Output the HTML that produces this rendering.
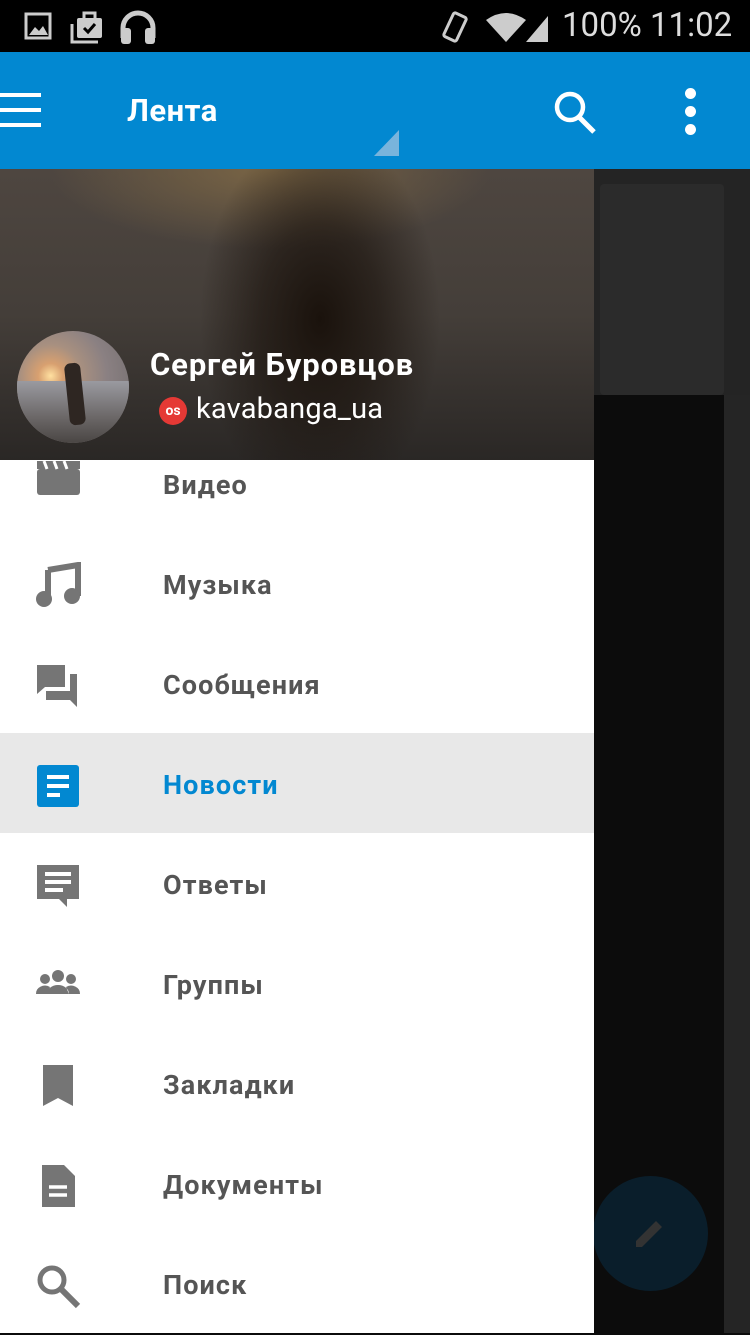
<!DOCTYPE html>
<html><head><meta charset="utf-8"><style>
*{margin:0;padding:0;box-sizing:border-box}
body{width:750px;height:1333px;overflow:hidden;background:#0b0b0b;font-family:"Roboto","Liberation Sans","DejaVu Sans",sans-serif;position:relative}
.abs{position:absolute}
.sb{left:0;top:0;width:750px;height:52px;background:#000;color:#ddd}
.tb{left:0;top:52px;width:750px;height:117px;background:#0288d1}
.item{position:absolute;left:0;width:594px;height:100px}
.item span{position:absolute;left:163px;top:50%;transform:translateY(-50%);font-size:27px;font-weight:bold;color:#555;letter-spacing:1.1px}
.item svg{position:absolute;left:34px;top:27px}
</style></head><body>
<div class="abs sb">
<svg class="abs" style="left:24px;top:12px" width="30" height="30" viewBox="0 0 30 30"><rect x="2" y="2" width="24" height="24" fill="none" stroke="#ccc" stroke-width="3"/><path d="M5 23 L11 15 L15 19 L19 14 L24 23Z" fill="#ccc"/></svg>
<svg class="abs" style="left:70px;top:10px" width="36" height="34" viewBox="0 0 36 34"><path d="M2 14 v18 h26" fill="none" stroke="#ccc" stroke-width="3"/><rect x="7" y="8" width="25" height="20" rx="2" fill="#ccc"/><rect x="14" y="3" width="11" height="7" fill="none" stroke="#ccc" stroke-width="3"/><path d="M14 18 l4 4 l7-8" fill="none" stroke="#000" stroke-width="3"/></svg>
<svg class="abs" style="left:118px;top:8px" width="40" height="38" viewBox="0 0 40 38"><path d="M5 30 v-10 a15 15 0 0 1 30 0 v10" fill="none" stroke="#ccc" stroke-width="5"/><rect x="3" y="20" width="10" height="16" rx="3" fill="#ccc"/><rect x="27" y="20" width="10" height="16" rx="3" fill="#ccc"/></svg>
<svg class="abs" style="left:438px;top:8px" width="36" height="36" viewBox="0 0 36 36"><rect x="10" y="6" width="14" height="26" rx="2" transform="rotate(25 17 19)" fill="none" stroke="#ccc" stroke-width="3"/></svg>
<svg class="abs" style="left:486px;top:12px" width="64" height="30" viewBox="0 0 64 30"><path d="M0 8 Q20 -6 40 8 L20 30Z" fill="#ccc"/><path d="M40 30 L62 4 V30Z" fill="#ccc"/></svg>
<div class="abs" style="left:562px;top:6px;font-size:33px;color:#ddd">100% 11:02</div>
</div>
<div class="abs tb">
<div class="abs" style="left:0;top:41px;width:41px;height:4px;background:#fff"></div>
<div class="abs" style="left:0;top:56px;width:41px;height:4px;background:#fff"></div>
<div class="abs" style="left:0;top:71px;width:41px;height:4px;background:#fff"></div>
<div class="abs" style="left:127px;top:40px;font-size:31px;font-weight:bold;color:#fff;letter-spacing:0.5px">Лента</div>
<svg class="abs" style="left:374px;top:78px" width="26" height="26"><path d="M0 26 L25 0 V26Z" fill="#79b4dc"/></svg>
<svg class="abs" style="left:552px;top:38px" width="46" height="46" viewBox="0 0 46 46"><circle cx="18" cy="17" r="13" fill="none" stroke="#fff" stroke-width="4.5"/><path d="M27 27 L42 42" stroke="#fff" stroke-width="5"/></svg>
<div class="abs" style="left:685px;top:36px;width:11px;height:11px;border-radius:50%;background:#fff"></div>
<div class="abs" style="left:685px;top:54px;width:11px;height:11px;border-radius:50%;background:#fff"></div>
<div class="abs" style="left:685px;top:72px;width:11px;height:11px;border-radius:50%;background:#fff"></div>
</div>
<div class="abs" style="left:594px;top:169px;width:156px;height:1164px;background:#0c0c0c"></div>
<div class="abs" style="left:594px;top:169px;width:156px;height:226px;background:#242424"></div>
<div class="abs" style="left:600px;top:184px;width:124px;height:211px;background:#2b2b2b;border-radius:4px"></div>
<div class="abs" style="left:724px;top:395px;width:26px;height:938px;background:#252525"></div>
<div class="abs" style="left:593px;top:1176px;width:115px;height:115px;border-radius:50%;background:#0a1e2b"></div>
<svg class="abs" style="left:632px;top:1215px" width="36" height="36" viewBox="0 0 36 36"><path d="M4 32 L4 26 L24 6 L30 12 L10 32Z" fill="#333"/></svg>
<div class="abs" style="left:0;top:169px;width:594px;height:291px;background:radial-gradient(ellipse 120px 190px at 320px 150px,#1a120c 0%,rgba(26,18,12,0.6) 50%,rgba(0,0,0,0) 100%),radial-gradient(ellipse 220px 80px at 270px 0px,#7a6545 0%,rgba(0,0,0,0) 100%),linear-gradient(180deg,#4e4640 0%,#443e39 50%,#2a2725 100%)"></div>
<div class="abs" style="left:17px;top:331px;width:112px;height:112px;border-radius:50%;background:radial-gradient(circle at 30% 40%,#ffe0a0 0%,#d8a070 12%,#a89080 30%,#8a8082 55%,#6e6a6a 100%);overflow:hidden">
<div class="abs" style="left:0;top:50px;width:112px;height:62px;background:linear-gradient(180deg,#9a9aa0,#6a6666 60%,#4a4644)"></div>
<div class="abs" style="left:50px;top:32px;width:16px;height:62px;background:#2e2622;border-radius:6px;transform:rotate(-6deg)"></div></div>
<div class="abs" style="left:150px;top:346px;font-size:31px;font-weight:bold;color:#fff;letter-spacing:0.9px">Сергей Буровцов</div>
<div class="abs" style="left:159px;top:397px;width:28px;height:28px;border-radius:50%;background:#e53935;color:#fff;font-size:14px;font-weight:bold;text-align:center;line-height:28px">os</div>
<div class="abs" style="left:196px;top:392px;font-size:29px;color:#fff;letter-spacing:0.2px">kavabanga_ua</div>
<div class="abs" style="left:0;top:460px;width:594px;height:873px;background:#fff"></div>
<div class="item" style="top:435px"><svg width="48" height="48" viewBox="0 0 48 48" style="top:22px"><rect x="3" y="12" width="43" height="26" rx="3" fill="#757575"/><path d="M3 4 h43 v8 h-43Z" fill="#757575"/><path d="M10 4 l3 8 M20 4 l3 8 M30 4 l3 8" stroke="#fff" stroke-width="3"/></svg><span>Видео</span></div>
<div class="item" style="top:535px"><svg width="48" height="48" viewBox="0 0 48 48"><path d="M14 8 L44 3 V34" fill="none" stroke="#757575" stroke-width="6"/><circle cx="10" cy="37" r="8" fill="#757575"/><circle cx="38" cy="34" r="8" fill="#757575"/><path d="M14 8 V37" stroke="#757575" stroke-width="6"/></svg><span>Музыка</span></div>
<div class="item" style="top:635px"><svg width="48" height="48" viewBox="0 0 48 48"><path d="M3 3 h28 v22 h-20 l-8 7Z" fill="#757575"/><path d="M36 12 h7 v33 l-7-7 h-24 v-9 h24Z" fill="#757575"/></svg><span>Сообщения</span></div>
<div class="abs" style="left:0;top:733px;width:594px;height:100px;background:#e8e8e8"></div>
<div class="item" style="top:735px"><svg width="48" height="48" viewBox="0 0 48 48"><rect x="3" y="3" width="42" height="42" rx="3" fill="#0288d1"/><path d="M13 15h22M13 24h22M13 33h13" stroke="#fff" stroke-width="4"/></svg><span style="color:#0288d1">Новости</span></div>
<div class="item" style="top:835px"><svg width="48" height="48" viewBox="0 0 48 48"><path d="M3 3 h42 v34 h-12 v8 l-8-8 h-22Z" fill="#757575"/><path d="M11 12h26M11 20h26M11 28h18" stroke="#fff" stroke-width="4"/></svg><span>Ответы</span></div>
<div class="item" style="top:935px"><svg width="48" height="48" viewBox="0 0 48 48"><circle cx="24" cy="14" r="6" fill="#757575"/><circle cx="11" cy="17" r="5" fill="#757575"/><circle cx="37" cy="17" r="5" fill="#757575"/><path d="M13 32 a11 9 0 0 1 22 0Z M2 32 a9 8 0 0 1 14-7 l-3 7Z M46 32 a9 8 0 0 0-14-7 l3 7Z" fill="#757575"/></svg><span>Группы</span></div>
<div class="item" style="top:1035px"><svg width="48" height="48" viewBox="0 0 48 48"><path d="M9 3 h30 v41 l-15-8 l-15 8Z" fill="#757575"/></svg><span>Закладки</span></div>
<div class="item" style="top:1135px"><svg width="48" height="48" viewBox="0 0 48 48"><path d="M8 3 h22 l11 11 v31 h-33Z" fill="#757575"/><path d="M15 25h18M15 33h18" stroke="#fff" stroke-width="3.5"/></svg><span>Документы</span></div>
<div class="item" style="top:1235px"><svg width="48" height="48" viewBox="0 0 48 48"><circle cx="18" cy="18" r="12" fill="none" stroke="#757575" stroke-width="5"/><path d="M27 27 L44 44" stroke="#757575" stroke-width="6"/></svg><span>Поиск</span></div>
</body></html>
